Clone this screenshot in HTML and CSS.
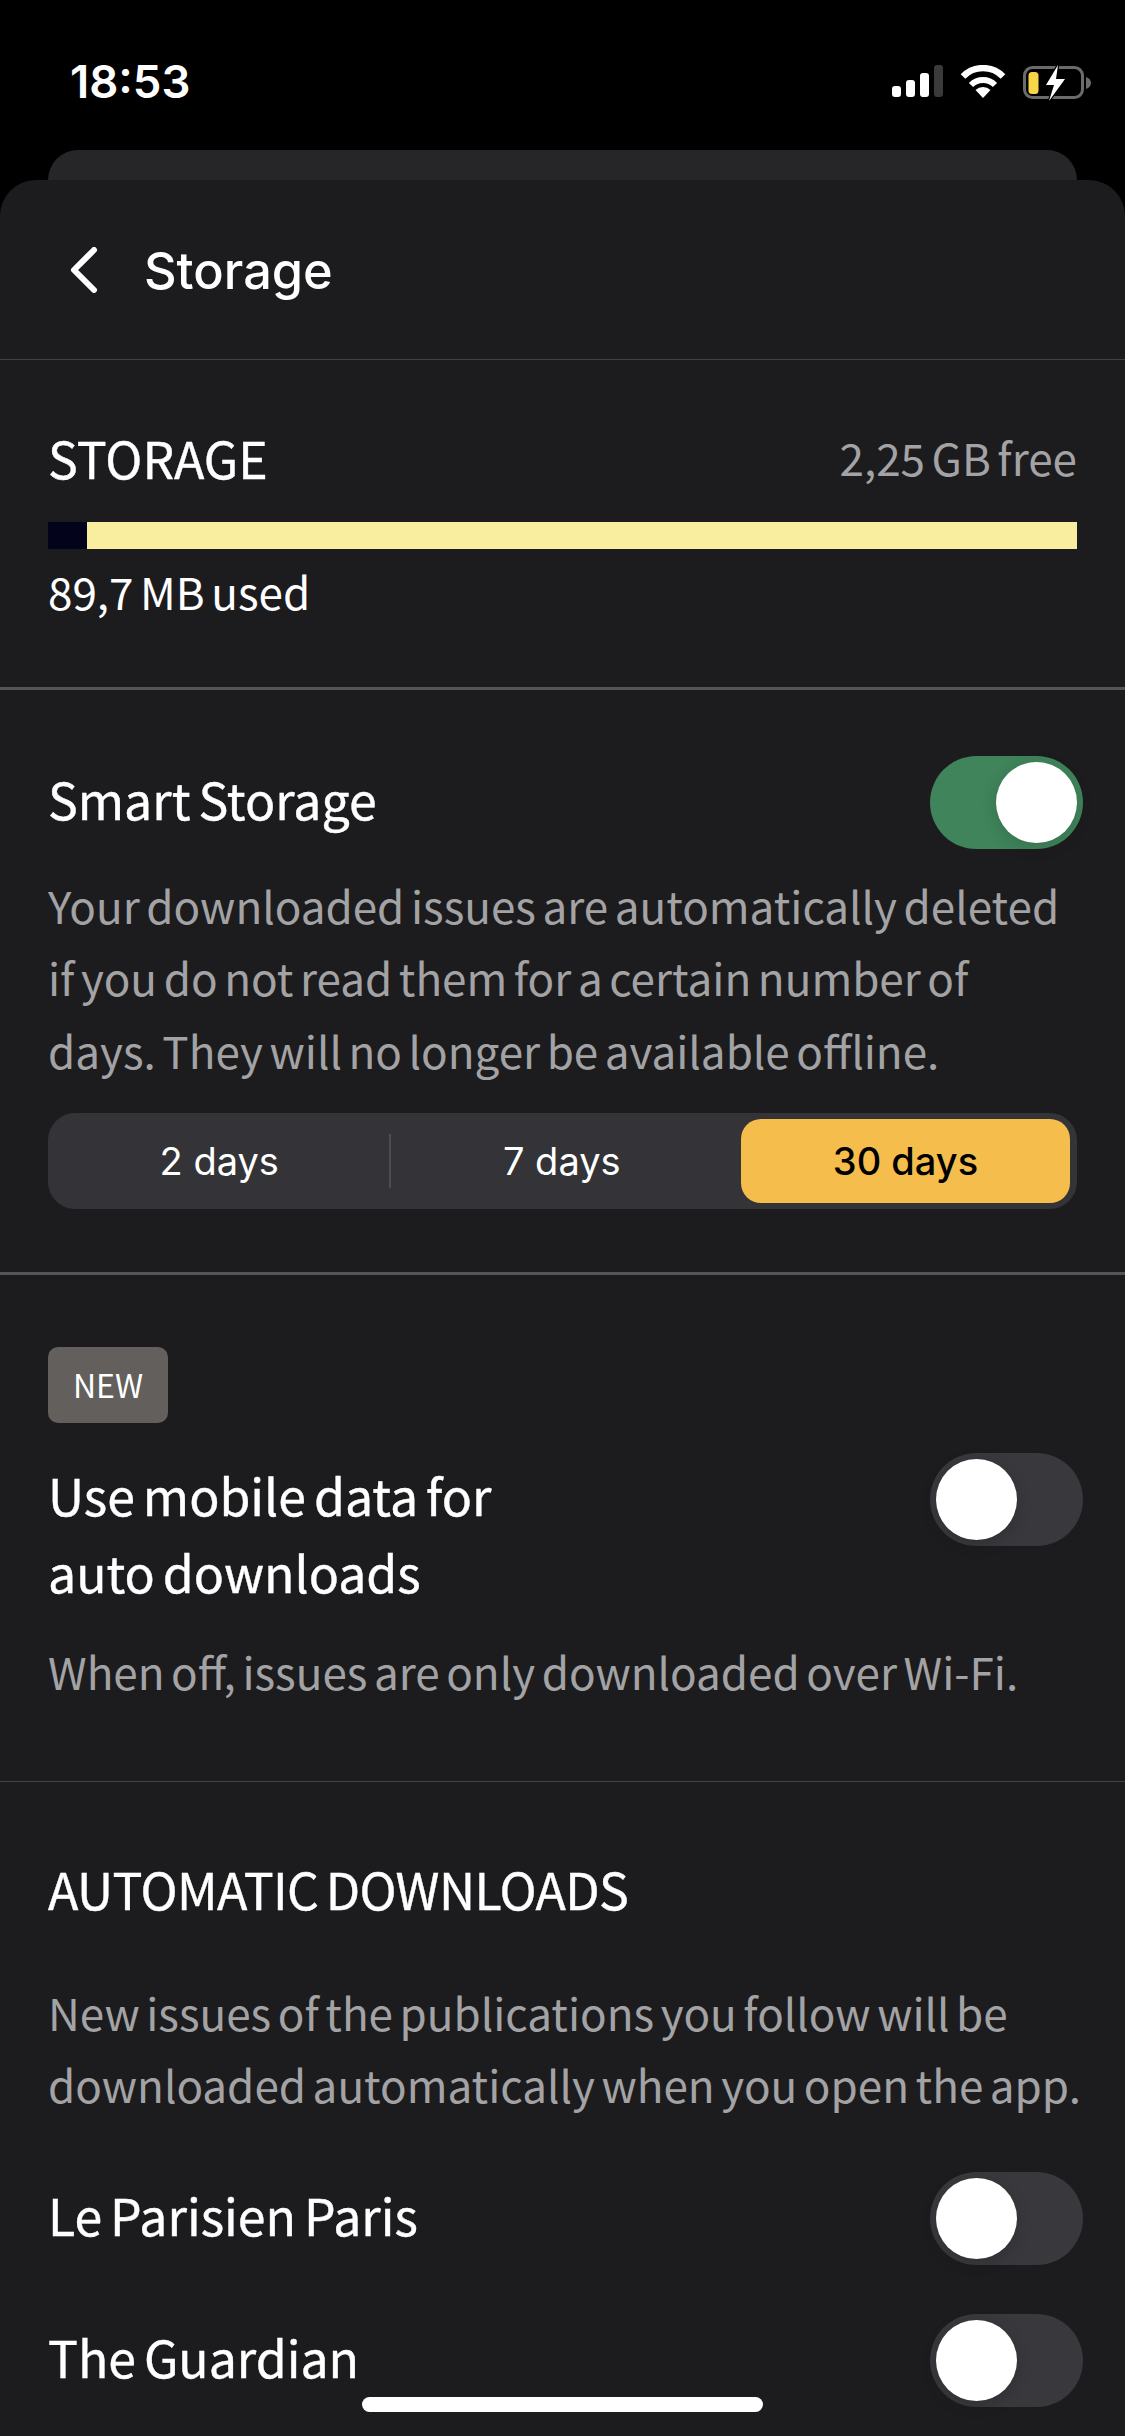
FILE: index.html
```html
<!DOCTYPE html>
<html lang="en">
<head>
    <meta charset="UTF-8">
    <meta name="viewport" content="width=device-width, initial-scale=1.0">
    <title>Storage</title>
    <link rel="stylesheet" href="styles.css">
</head>
<body>
    <!-- Status bar -->
    <div class="statusbar">
        <span class="clock">18:53</span>
        <div class="status-icons">
            <svg width="51" height="32" viewBox="0 0 51 32">
                <rect x="0" y="21" width="9" height="11" rx="3" fill="#fff"/>
                <rect x="14" y="15" width="9" height="17" rx="3" fill="#fff"/>
                <rect x="28" y="8" width="9" height="24" rx="3" fill="#fff"/>
                <rect x="42" y="0" width="9" height="32" rx="3" fill="#3a3a3a"/>
            </svg>
            <svg width="46" height="33" viewBox="0 0 46 33">
                <path d="M3 11.5 A28 28 0 0 1 43 11.5" fill="none" stroke="#fff" stroke-width="6.5"/>
                <path d="M11 20 A17 17 0 0 1 35 20" fill="none" stroke="#fff" stroke-width="6"/>
                <path d="M15.5 25 A11 11 0 0 1 30.5 25 L23 33 Z" fill="#fff"/>
            </svg>
            <svg width="68" height="36" viewBox="0 0 68 36">
                <rect x="1.5" y="2.5" width="58" height="30" rx="8" fill="none" stroke="#6b6b6b" stroke-width="3"/>
                <path d="M63 12 C66 13 68 15 68 18 C68 21 66 23 63 24 Z" fill="#6b6b6b"/>
                <rect x="5.5" y="7" width="10" height="22" rx="3.5" fill="#f9d648"/>
                <path d="M35 0 L23 20 L31 20 L26 36 L42 14 L33 14 Z" fill="#fff" stroke="#000" stroke-width="2.5" paint-order="stroke"/>
            </svg>
        </div>
    </div>

    <div class="back-card"></div>

    <div class="sheet">
        <div class="topbar">
            <svg class="back" width="30" height="46" viewBox="0 0 30 46">
                <path d="M25 3 L5 23 L25 43" fill="none" stroke="#fff" stroke-width="6" stroke-linecap="round" stroke-linejoin="round"/>
            </svg>
            <span class="topbar-title">Storage</span>
        </div>

        <div class="section usage">
            <div class="usage-head">
                <span class="heading">STORAGE</span>
                <span class="free">2,25 GB free</span>
            </div>
            <div class="bar"><div class="bar-used"></div></div>
            <div class="used">89,7 MB used</div>
        </div>

        <div class="section smart">
            <div class="row">
                <span class="title">Smart Storage</span>
                <div class="toggle on"><div class="knob"></div></div>
            </div>
            <p class="desc">Your downloaded issues are automatically deleted if you do not read them for a certain number of days. They will no longer be available offline.</p>
            <div class="segments">
                <div class="segment">2 days</div>
                <div class="segment-line"></div>
                <div class="segment">7 days</div>
                <div class="segment active">30 days</div>
            </div>
        </div>

        <div class="section mobile">
            <span class="badge">NEW</span>
            <div class="row mobile-row">
                <span class="title">Use mobile data for<br>auto downloads</span>
                <div class="toggle"><div class="knob"></div></div>
            </div>
            <p class="desc">When off, issues are only downloaded over Wi-Fi.</p>
        </div>

        <div class="section auto">
            <div class="heading">AUTOMATIC DOWNLOADS</div>
            <p class="desc auto-desc">New issues of the publications you follow will be downloaded automatically when you open the app.</p>
            <div class="row pub">
                <span class="title">Le Parisien Paris</span>
                <div class="toggle"><div class="knob"></div></div>
            </div>
            <div class="row pub">
                <span class="title">The Guardian</span>
                <div class="toggle"><div class="knob"></div></div>
            </div>
        </div>
    </div>

    <div class="home-indicator"></div>
</body>
</html>
```

FILE: styles.css
```css
html, body {
    height: 2436px;
    overflow: hidden;
}
body {
    margin: 0;
    background-color: #000;
    color: #fff;
    font-family: "Noto Sans CJK SC", "Noto Sans", sans-serif;
    word-spacing: -3.3px;
    position: relative;
}
.statusbar {
    height: 150px;
    box-sizing: border-box;
    padding: 60px 34px 0 70px;
    display: flex;
    justify-content: space-between;
    align-items: flex-start;
}
.clock {
    font-family: Inter, sans-serif;
    font-weight: 600;
    font-size: 45.5px;
    line-height: 44px;
}
.status-icons {
    display: flex;
    align-items: flex-start;
    gap: 17px;
    padding-top: 5px;
}
.back-card {
    height: 30px;
    margin: 0 48px;
    background-color: #262628;
    border-radius: 30px 30px 0 0;
}
.sheet {
    background-color: #1c1c1e;
    border-radius: 36px 36px 0 0;
    height: 2256px;
}
.topbar {
    height: 180px;
    box-sizing: border-box;
    display: flex;
    align-items: center;
    padding: 1px 0 0 69px;
    border-bottom: 1px solid #424244;
}
.topbar-title {
    font-family: Inter, sans-serif;
    font-weight: 500;
    font-size: 50.5px;
    margin-left: 45px;
}
.section {
    padding: 0 48px;
    box-sizing: border-box;
}
.usage {
    height: 330px;
    padding-top: 62px;
    border-bottom: 3px solid #555557;
}
.usage-head {
    display: flex;
    justify-content: space-between;
    align-items: center;
    height: 70px;
}
.heading {
    font-size: 50px;
    line-height: 70px;
    -webkit-text-stroke: 0.4px #fff;
}
.free {
    font-size: 44px;
    color: #a3a3a5;
}
.bar {
    height: 27px;
    margin-top: 30px;
    background-color: #f9ee9f;
}
.bar-used {
    width: 39px;
    height: 100%;
    background-color: #03031c;
}
.used {
    font-size: 44px;
    line-height: 60px;
    margin-top: 12px;
}
.smart {
    height: 585px;
    padding-top: 66px;
    border-bottom: 3px solid #555557;
}
.row {
    display: flex;
    justify-content: space-between;
    align-items: center;
    margin-right: -6px;
}
.title {
    font-size: 50px;
    -webkit-text-stroke: 0.4px #fff;
    line-height: 77px;
    padding-bottom: 8px;
}
.toggle {
    width: 153px;
    height: 93px;
    border-radius: 47px;
    background-color: #38383d;
    padding: 6px;
    box-sizing: border-box;
    flex-shrink: 0;
    display: flex;
}
.toggle.on {
    background-color: #3f845b;
    justify-content: flex-end;
}
.knob {
    width: 81px;
    height: 81px;
    border-radius: 50%;
    background-color: #fff;
    box-shadow: 0 4px 16px rgba(0, 0, 0, 0.15);
}
.desc {
    margin: 0;
    font-size: 44px;
    line-height: 72.3px;
    color: #a3a3a5;
}
.smart .desc {
    margin-top: 20px;
}
.segments {
    display: flex;
    align-items: center;
    height: 96px;
    margin-top: 27px;
    padding: 6px 7px 6px 0;
    box-sizing: border-box;
    background-color: #333338;
    border-radius: 27px;
    font-family: Inter, sans-serif;
    font-size: 38px;
    word-spacing: 0;
}
.segment {
    flex: 1;
    text-align: center;
    line-height: 84px;
}
.segment-line {
    width: 2px;
    height: 54px;
    background-color: #4d4d52;
    margin-left: -2px;
}
.segment.active {
    flex: 0 0 329px;
    margin-left: 8px;
    background-color: #f5bd4b;
    color: #000;
    font-weight: 500;
    border-radius: 20px;
}
.mobile {
    height: 507px;
    padding-top: 72px;
    border-bottom: 1px solid #424244;
}
.badge {
    display: block;
    width: 120px;
    height: 76px;
    line-height: 74px;
    text-align: center;
    background-color: #625f5c;
    border-radius: 10px;
    font-size: 32px;
}
.mobile-row {
    align-items: flex-start;
    margin-top: 30px;
}
.mobile-row .title {
    padding: 3px 0 0;
}
.mobile .desc {
    margin-top: 25px;
}
.auto {
    padding-top: 71px;
}
.auto .heading {
    letter-spacing: -0.6px;
}
.auto-desc {
    margin: 53px -10px 0 0;
}
.pub {
    height: 93px;
    margin-top: 49px;
}
.auto-desc + .pub {
    margin-top: 51px;
}
.home-indicator {
    position: absolute;
    left: 362px;
    bottom: 24px;
    width: 401px;
    height: 15px;
    border-radius: 8px;
    background-color: #fff;
}
```
